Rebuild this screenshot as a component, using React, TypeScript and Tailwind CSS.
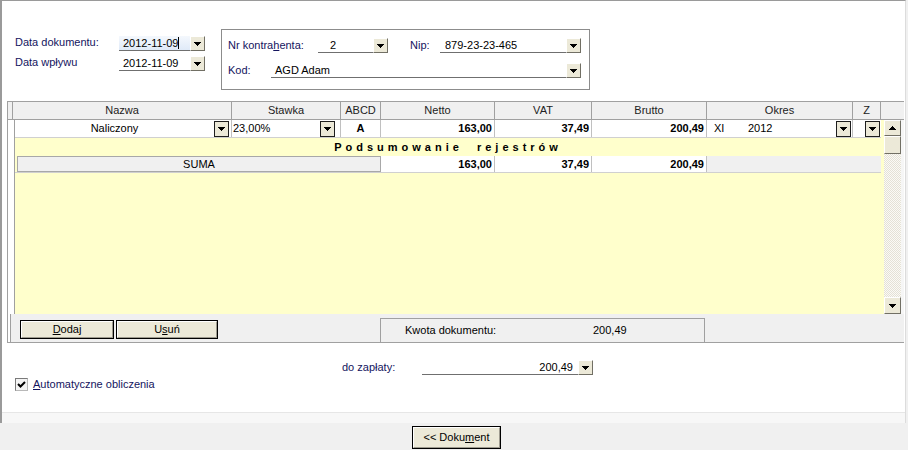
import React from 'react';

// small windows-style arrow glyphs
const ArrowDown = () => (
  <svg width="7" height="4" viewBox="0 0 7 4" shapeRendering="crispEdges">
    <path d="M0 0h7v1h-1v1h-1v1h-1v1h-1v-1h-1v-1h-1v-1h-1z" fill="#000" />
  </svg>
);

const ArrowUp = () => (
  <svg width="7" height="4" viewBox="0 0 7 4" shapeRendering="crispEdges">
    <path d="M0 4h7v-1h-1v-1h-1v-1h-1v-1h-1v1h-1v1h-1v1h-1z" fill="#000" />
  </svg>
);

const DropBtn = ({ dark = false, tall = false }: { dark?: boolean; tall?: boolean }) => (
  <div
    className={`w-[15px] ${tall ? 'h-[16px]' : 'h-[15px]'} shrink-0 flex items-center justify-center bg-[#ece9d8] border ${
      dark
        ? 'border-[#1e1e1e]'
        : 'border-t-white border-l-white border-r-[#716f64] border-b-[#716f64]'
    }`}
  >
    <ArrowDown />
  </div>
);

const Field = ({ className, children }: { className: string; children?: React.ReactNode }) => (
  <div className={`h-[15px] border-b border-[#6f6f6f] flex items-center whitespace-nowrap ${className}`}>
    {children}
  </div>
);

const cols = [
  { label: 'Nazwa', w: 'w-[219px]' },
  { label: 'Stawka', w: 'w-[109px]' },
  { label: 'ABCD', w: 'w-[40px]' },
  { label: 'Netto', w: 'w-[114px]' },
  { label: 'VAT', w: 'w-[97px]' },
  { label: 'Brutto', w: 'w-[115px]' },
  { label: 'Okres', w: 'w-[146px]' },
  { label: 'Z', w: 'w-[28px]' },
];

const WinButton = ({ className, children }: { className: string; children: React.ReactNode }) => (
  <div className={`border border-black bg-[#ece9d8] ${className}`}>
    <div className="w-full h-full border border-t-white border-l-white border-r-[#9d9a8e] border-b-[#9d9a8e] flex items-center justify-center">
      {children}
    </div>
  </div>
);

export default function App() {
  return (
    <div className="w-[908px] h-[450px] bg-[#f0f0f0] font-['Liberation_Sans',Arial,sans-serif] text-[11px] leading-none text-black overflow-hidden">
      <div className="w-[906px] h-[423px] border-l-2 border-t border-r border-l-[#9a9a9a] border-t-[#9a9a9a] border-r-[#dcdcdc] flex flex-col">
        <div className="h-[411px] bg-white flex flex-col">
          {/* top fields */}
          <div className="h-[100px] flex">
            <div className="w-[219px] pl-[13px] pt-[35px] flex flex-col gap-[5px]">
              <div className="flex h-[15px]">
                <div className="w-[104px] text-[#14145e] mt-[1px]">Data dokumentu:</div>
                <Field className="w-[71px] pl-[4px] bg-[linear-gradient(#f4f8fd,#dfeaf8)]">
                  2012-11-09
                  <span className="w-px h-[12px] bg-black" />
                </Field>
                <DropBtn />
              </div>
              <div className="flex h-[15px]">
                <div className="w-[104px] text-[#14145e] mt-[1px]">Data wpływu</div>
                <Field className="w-[71px] pl-[4px]">2012-11-09</Field>
                <DropBtn />
              </div>
            </div>

            <div className="mt-[28px] w-[369px] h-[61px] border border-[#8c8c8c] pl-[6px] pt-[8px] flex flex-col gap-[10px]">
              <div className="flex h-[15px] items-center">
                <div className="w-[90px] text-[#14145e]">
                  Nr kontra<span className="underline">h</span>enta:
                </div>
                <Field className="w-[55px] pl-[12px]">2</Field>
                <DropBtn />
                <div className="ml-[22px] w-[30px] text-[#14145e]">Nip:</div>
                <Field className="w-[126px] pl-[5px]">879-23-23-465</Field>
                <DropBtn />
              </div>
              <div className="flex h-[15px] items-center">
                <div className="w-[43px] text-[#14145e]">Kod:</div>
                <Field className="w-[295px] pl-[4px]">AGD Adam</Field>
                <DropBtn />
              </div>
            </div>
          </div>

          {/* grid */}
          <div className="ml-[5px] w-[897px] border-l border-t border-b border-[#a0a0a0] flex flex-col">
            <div className="h-[18px] flex bg-[#f0f0f0] border-b border-[#a0a0a0]">
              <div className="w-[5px] border-r border-[#a0a0a0]" />
              {cols.map((c) => (
                <div key={c.label} className={`${c.w} border-r border-[#a0a0a0] flex items-center justify-center text-[#222]`}>
                  {c.label}
                </div>
              ))}
            </div>

            <div className="h-[194px] flex">
              <div className="w-[6px] bg-white" />
              <div className="w-[867px] border-l border-[#a0a0a0] bg-[#ffffcc] flex flex-col">
                {/* row 1 */}
                <div className="h-[18px] flex bg-white border-b border-[#d0d0d0]">
                  <div className="w-[217px] flex items-center border-r border-[#c0c0c0]">
                    <div className="flex-1 text-center">Naliczony</div>
                    <DropBtn dark tall />
                    <div className="w-[2px]" />
                  </div>
                  <div className="w-[109px] flex items-center border-r border-[#c0c0c0]">
                    <div className="flex-1 pl-[1px]">23,00%</div>
                    <DropBtn dark tall />
                    <div className="w-[5px]" />
                  </div>
                  <div className="w-[40px] flex items-center justify-center font-bold border-r border-[#c0c0c0]">A</div>
                  <div className="w-[114px] flex items-center justify-end pr-[2px] font-bold border-r border-[#c0c0c0]">163,00</div>
                  <div className="w-[97px] flex items-center justify-end pr-[2px] font-bold border-r border-[#c0c0c0]">37,49</div>
                  <div className="w-[115px] flex items-center justify-end pr-[2px] font-bold border-r border-[#c0c0c0]">200,49</div>
                  <div className="w-[146px] flex items-center border-r border-[#c0c0c0]">
                    <div className="pl-[7px] w-[41px]">XI</div>
                    <div className="flex-1">2012</div>
                    <DropBtn dark tall />
                    <div className="w-[1px]" />
                  </div>
                  <div className="w-[28px] flex items-center justify-end pr-[1px]">
                    <DropBtn dark tall />
                  </div>
                </div>
                {/* row 2 */}
                <div className="h-[18px] flex items-center justify-center font-bold tracking-[4px] whitespace-pre">
                  Podsumowanie{'  '}rejestrów
                </div>
                {/* row 3 */}
                <div className="h-[17px] flex border-b border-[#d0d0d0]">
                  <div className="w-[2px]" />
                  <div className="w-[364px] bg-[#f0f0f0] border border-[#a8a8a8] flex items-center justify-center">SUMA</div>
                  <div className="w-[114px] bg-white flex items-center justify-end pr-[2px] font-bold border-r border-[#c0c0c0]">163,00</div>
                  <div className="w-[97px] bg-white flex items-center justify-end pr-[2px] font-bold border-r border-[#c0c0c0]">37,49</div>
                  <div className="w-[115px] bg-white flex items-center justify-end pr-[2px] font-bold border-r border-[#c0c0c0]">200,49</div>
                  <div className="flex-1 bg-[#f0f0f0]" />
                </div>
                <div className="flex-1" />
              </div>
              <div className="w-[3px] bg-[#ffffcc]" />
              {/* scrollbar */}
              <div className="w-[17px] flex flex-col bg-[repeating-conic-gradient(#fbfaf6_0_25%,#e4e1d6_0_50%)] bg-[length:2px_2px]">
                <div className="h-[16px] bg-[#ece9d8] border border-t-white border-l-white border-r-[#716f64] border-b-[#716f64] flex items-center justify-center">
                  <ArrowUp />
                </div>
                <div className="h-[18px] bg-[#ece9d8] border border-t-white border-l-white border-r-[#716f64] border-b-[#716f64]" />
                <div className="flex-1" />
                <div className="h-[17px] bg-[#ece9d8] border border-t-white border-l-white border-r-[#716f64] border-b-[#716f64] flex items-center justify-center">
                  <ArrowDown />
                </div>
              </div>
              <div className="flex-1 bg-[#f6f6f6]" />
            </div>

            {/* bottom bar */}
            <div className="h-[28px] flex bg-[#f0f0f0]">
              <div className="w-[3px] bg-white border-r border-[#a0a0a0]" />
              <div className="pl-[9px] pt-[6px] flex gap-[2px]">
                <WinButton className="w-[94px] h-[19px]">
                  <span className="underline">D</span>odaj
                </WinButton>
                <WinButton className="w-[102px] h-[19px]">
                  U<span className="underline">s</span>uń
                </WinButton>
              </div>
              <div className="ml-[162px] mt-[4px] w-[325px] border-t border-l border-r border-[#a0a0a0] flex items-center pl-[24px]">
                <div className="w-[188px]">Kwota dokumentu:</div>
                <div>200,49</div>
              </div>
            </div>
          </div>

          {/* do zapłaty */}
          <div className="mt-[17px] ml-[340px] flex h-[15px] items-center">
            <div className="w-[80px] text-[#14145e]">do zapłaty:</div>
            <Field className="w-[156px] justify-end pr-[5px]">200,49</Field>
            <DropBtn />
          </div>

          {/* checkbox */}
          <div className="mt-[3px] ml-[13px] flex items-center h-[13px]">
            <div className="w-[13px] h-[13px] border border-t-[#7a7a7a] border-l-[#7a7a7a] border-r-[#b8b8b8] border-b-[#b8b8b8] bg-[#f4f4f4] flex items-center justify-center">
              <svg width="9" height="9" viewBox="0 0 9 9">
                <path d="M1 4l2.5 2.5L8 2" stroke="#000" strokeWidth="2" fill="none" />
              </svg>
            </div>
            <div className="ml-[5px] text-[#14145e]">
              <span className="underline">A</span>utomatyczne obliczenia
            </div>
          </div>
        </div>
        <div className="h-[11px] bg-[#f7f7f7] border-t border-[#e6e6e6]" />
      </div>

      <div className="mt-[3px] ml-[412px]">
        <WinButton className="w-[89px] h-[23px]">
          {'<< Doku'}
          <span className="underline">m</span>ent
        </WinButton>
      </div>
    </div>
  );
}
